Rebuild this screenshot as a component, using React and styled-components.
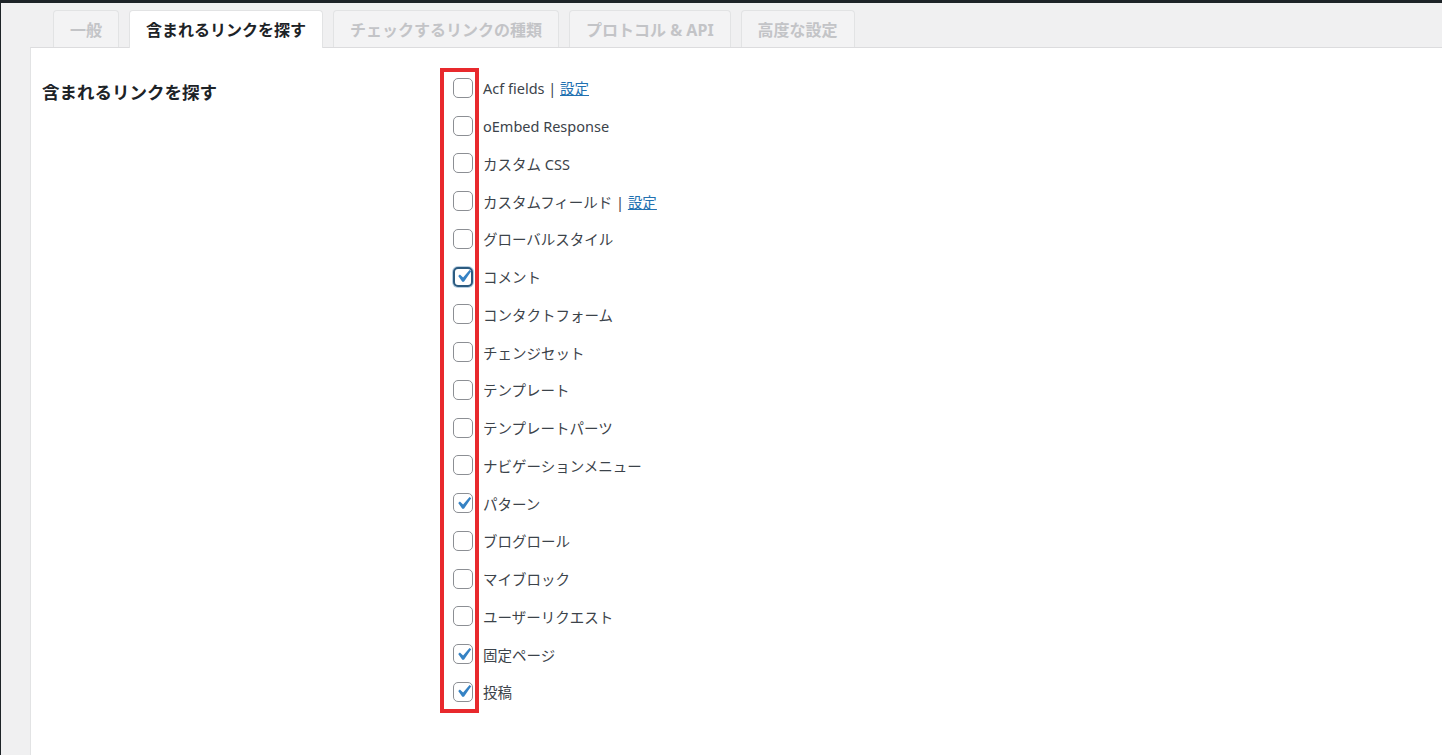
import { styled, createGlobalStyle } from "styled-components";

const GlobalStyle = createGlobalStyle`
  html, body {
    margin: 0;
    padding: 0;
    background: #f0f0f1;
    font-family: "Noto Sans", "Noto Sans CJK JP", sans-serif;
    color: #3c434a;
  }
`;

const tabs = [
  { label: "一般" },
  { label: "含まれるリンクを探す", active: true },
  { label: "チェックするリンクの種類" },
  { label: "プロトコル & API" },
  { label: "高度な設定" },
];

const items = [
  { label: "Acf fields", link: true },
  { label: "oEmbed Response" },
  { label: "カスタム CSS" },
  { label: "カスタムフィールド", link: true },
  { label: "グローバルスタイル" },
  { label: "コメント", checked: true, focused: true },
  { label: "コンタクトフォーム" },
  { label: "チェンジセット" },
  { label: "テンプレート" },
  { label: "テンプレートパーツ" },
  { label: "ナビゲーションメニュー" },
  { label: "パターン", checked: true },
  { label: "ブログロール" },
  { label: "マイブロック" },
  { label: "ユーザーリクエスト" },
  { label: "固定ページ", checked: true },
  { label: "投稿", checked: true },
];

export default function App() {
  return (
    <>
      <GlobalStyle />
      <Page>
        <TopBar />
        <Wrap>
          <TabNav>
            {tabs.map((t) => (
              <Tab key={t.label} $active={t.active}>
                {t.label}
              </Tab>
            ))}
          </TabNav>
          <Panel>
            <Heading>含まれるリンクを探す</Heading>
            <List>
              {items.map((it) => (
                <Row key={it.label}>
                  <Box $checked={it.checked} $focused={it.focused}>
                    {it.checked && (
                      <CheckMark viewBox="0 0 20 20">
                        <path
                          d="M14.83 4.89l1.34.94-5.81 8.38H9.02L5.78 9.67l1.34-1.25 2.57 2.4z"
                          fill="#3582c4"
                        />
                      </CheckMark>
                    )}
                  </Box>
                  <Label>
                    {it.label}
                    {it.link && (
                      <>
                        {" | "}
                        <SettingsLink>設定</SettingsLink>
                      </>
                    )}
                  </Label>
                </Row>
              ))}
              <Highlight />
            </List>
          </Panel>
        </Wrap>
      </Page>
    </>
  );
}

const Page = styled.div`
  min-height: 755px;
  display: flex;
  flex-direction: column;
  border-left: 1px solid #1d2327;
  box-sizing: border-box;
`;

const TopBar = styled.div`
  height: 3px;
  background: #1d2327;
`;

const Wrap = styled.div`
  flex: 1;
  display: flex;
  flex-direction: column;
  padding: 7px 0 0 29px;
`;

const TabNav = styled.div`
  display: flex;
  gap: 10px;
  padding-left: 23px;
  position: relative;
  z-index: 1;
`;

const Tab = styled.div`
  height: 36px;
  padding: 0 16px;
  display: flex;
  align-items: center;
  font-size: 16px;
  font-weight: 700;
  border: 1px solid #e2e3e4;
  border-bottom: none;
  border-radius: 4px 4px 0 0;
  color: ${(p) => (p.$active ? "#1d2327" : "#c3c4c7")};
  background: ${(p) => (p.$active ? "#fff" : "#f3f3f4")};
  margin-bottom: ${(p) => (p.$active ? "-1px" : "0")};
  padding-bottom: ${(p) => (p.$active ? "1px" : "0")};
`;

const Panel = styled.div`
  flex: 1;
  background: #fff;
  border-top: 1px solid #dcdcde;
  border-left: 1px solid #e2e3e4;
  display: flex;
  padding: 21px 0 0 11px;
`;

const Heading = styled.div`
  width: 411px;
  font-size: 17.5px;
  font-weight: 700;
  color: #1d2327;
  padding-top: 10px;
`;

const List = styled.div`
  position: relative;
  display: flex;
  flex-direction: column;
`;

const Row = styled.label`
  height: 37.75px;
  display: flex;
  align-items: center;
  gap: 10px;
`;

const Box = styled.span`
  width: 20px;
  height: 20px;
  box-sizing: border-box;
  border-radius: 5px;
  border: ${(p) => (p.$focused ? "2px solid #2c5b80" : "1px solid #8c8f94")};
  box-shadow: ${(p) => (p.$focused ? "0 0 0 1px #b8cfe2" : "none")};
  display: flex;
  align-items: center;
  justify-content: center;
  background: #fff;
  overflow: visible;
`;

const CheckMark = styled.svg`
  width: 25px;
  height: 25px;
  flex: none;
  margin: -3px;
`;

const Label = styled.span`
  font-size: 14.5px;
  color: #3c434a;
`;

const SettingsLink = styled.a`
  color: #2271b1;
  text-decoration: underline;
`;

const Highlight = styled.div`
  position: absolute;
  left: -13px;
  top: -1px;
  width: 39px;
  height: 645px;
  box-sizing: border-box;
  border: 4px solid #e8292d;
  pointer-events: none;
`;
